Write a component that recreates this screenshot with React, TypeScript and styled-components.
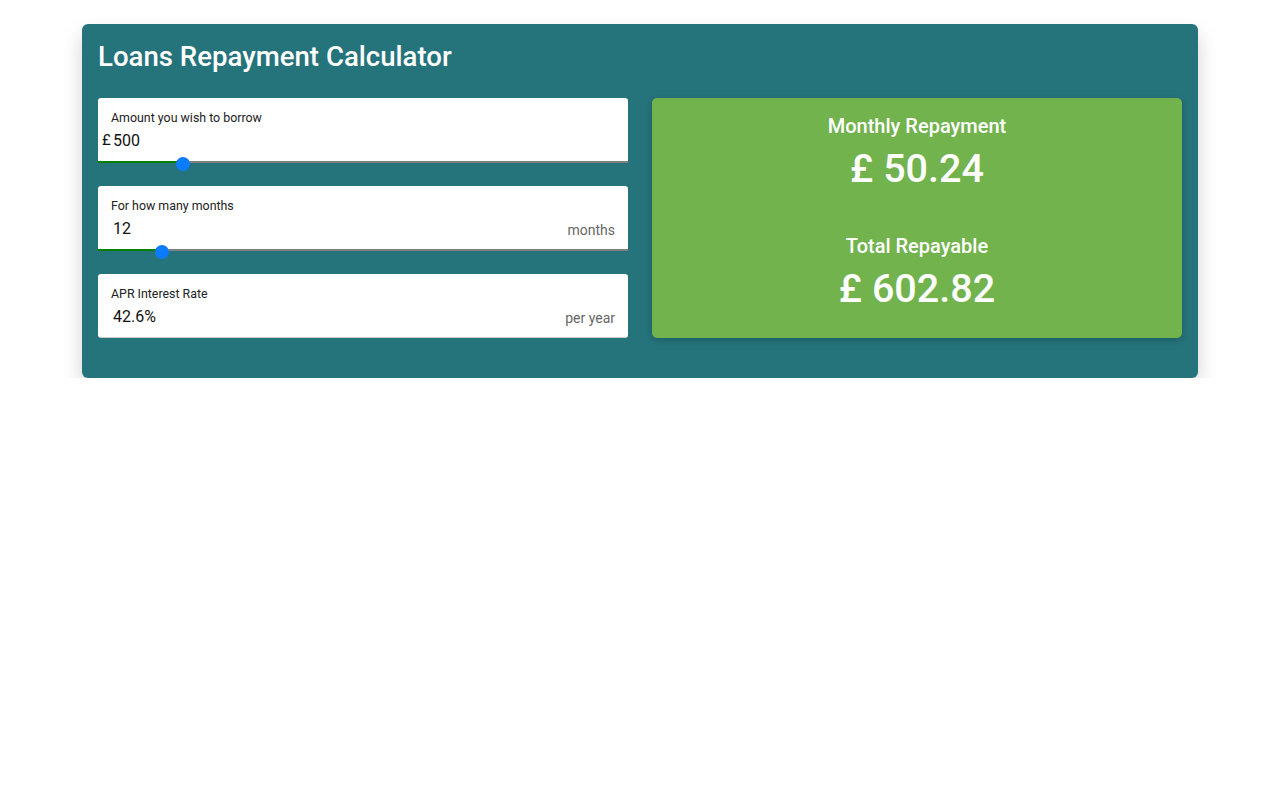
import * as React from 'react';
import styled, { createGlobalStyle } from 'styled-components';

const colors = {
  teal: '#25737b',
  green: '#72b34e',
  white: '#ffffff',
  label: '#222222',
  muted: '#666666',
  thumb: '#0b7bff',
  fill: '#008000',
  track: '#808080'
};

const GlobalStyle = createGlobalStyle`
  body {
    margin: 0;
    background: #ffffff;
    font-family: Roboto, 'Liberation Sans', Arial, sans-serif;
  }
`;

const Page = styled.div`
  padding-top: 24px;
`;

const Calculator = styled.div`
  width: 1116px;
  box-sizing: border-box;
  margin: 0 auto;
  padding: 16px 16px 40px;
  background: ${colors.teal};
  border-radius: 6px;
  box-shadow: 0 10px 20px rgba(0, 0, 0, 0.18);
`;

const Title = styled.h1`
  margin: 0 0 24px;
  font-size: 27.6px;
  line-height: 34px;
  font-weight: 500;
  color: ${colors.white};
`;

const Columns = styled.div`
  display: grid;
  grid-template-columns: 1fr 1fr;
  gap: 24px;
  align-items: start;
`;

const Fields = styled.div`
  display: flex;
  flex-direction: column;
  gap: 23px;
`;

const FieldGroup = styled.div`
  display: flex;
  flex-direction: column;
`;

const Field = styled.div<{ $bordered?: boolean }>`
  height: ${p => (p.$bordered ? 64 : 63)}px;
  box-sizing: border-box;
  padding-top: 12px;
  background: ${colors.white};
  border-radius: 3px 3px ${p => (p.$bordered ? '3px 3px' : '0 0')};
  border-bottom: ${p => (p.$bordered ? '1px solid #c8c8c8' : 'none')};
`;

const Label = styled.div`
  padding-left: 13px;
  font-size: 12.4px;
  line-height: 16px;
  color: ${colors.label};
`;

const ValueRow = styled.div`
  display: flex;
  align-items: center;
  height: 28px;
  padding: 0 13px 0 4px;
`;

const Prefix = styled.span`
  width: 11px;
  flex: none;
  font-size: 15px;
  color: #111111;
`;

const ValueInput = styled.input`
  flex: 1;
  min-width: 0;
  border: none;
  outline: none;
  padding: 0;
  background: transparent;
  font-family: inherit;
  font-size: 16px;
  color: #111111;
`;

const Suffix = styled.span`
  flex: none;
  padding-top: 4px;
  font-size: 14px;
  color: ${colors.muted};
`;

const Range = styled.input`
  -webkit-appearance: none;
  appearance: none;
  display: block;
  width: 100%;
  height: 2px;
  margin: 0;
  background: transparent;

  &::-webkit-slider-runnable-track {
    height: 2px;
    background: linear-gradient(
      to right,
      ${colors.fill} var(--fill),
      ${colors.track} var(--fill)
    );
  }

  &::-webkit-slider-thumb {
    -webkit-appearance: none;
    width: 14px;
    height: 14px;
    margin-top: -4px;
    border-radius: 50%;
    background: ${colors.thumb};
    border: none;
  }
`;

const Results = styled.div`
  display: flex;
  flex-direction: column;
  align-items: center;
  height: 240px;
  box-sizing: border-box;
  padding-top: 16px;
  background: ${colors.green};
  border-radius: 5px;
  box-shadow: 0 2px 6px rgba(0, 0, 0, 0.2);
  color: ${colors.white};
`;

const ResultTitle = styled.h3<{ $gap?: number }>`
  margin: ${p => p.$gap || 0}px 0 7px;
  font-size: 20px;
  line-height: 24px;
  font-weight: 500;
`;

const ResultValue = styled.div`
  font-size: 39.5px;
  line-height: 48px;
  font-weight: 500;
`;

type SliderProps = {
  value: number;
  min: number;
  max: number;
  step: number;
  onChange: (value: number) => void;
};

function Slider(props: SliderProps) {
  const { value, min, max, step, onChange } = props;
  const fraction = (value - min) / (max - min);
  const fill = `calc(7px + ${fraction} * (100% - 14px))`;

  return (
    <Range
      type="range"
      min={min}
      max={max}
      step={step}
      value={value}
      style={{ '--fill': fill } as React.CSSProperties}
      onChange={e => onChange(Number(e.target.value))}
    />
  );
}

const App = () => {
  const [amount, setAmount] = React.useState(500);
  const [months, setMonths] = React.useState(12);
  const [apr, setApr] = React.useState('42.6%');

  const rate = parseFloat(apr) || 0;
  const monthlyRate = Math.pow(1 + rate / 100, 1 / 12) - 1;
  const monthly =
    monthlyRate === 0
      ? amount / months
      : (amount * monthlyRate) / (1 - Math.pow(1 + monthlyRate, -months));
  const total = monthly * months;

  return (
    <Page>
      <GlobalStyle />
      <Calculator>
        <Title>Loans Repayment Calculator</Title>
        <Columns>
          <Fields>
            <FieldGroup>
              <Field>
                <Label>Amount you wish to borrow</Label>
                <ValueRow>
                  <Prefix>£</Prefix>
                  <ValueInput
                    value={amount}
                    onChange={e => setAmount(Number(e.target.value) || 0)}
                  />
                </ValueRow>
              </Field>
              <Slider value={amount} min={0} max={3300} step={50} onChange={setAmount} />
            </FieldGroup>
            <FieldGroup>
              <Field>
                <Label>For how many months</Label>
                <ValueRow>
                  <Prefix />
                  <ValueInput
                    value={months}
                    onChange={e => setMonths(Number(e.target.value) || 1)}
                  />
                  <Suffix>months</Suffix>
                </ValueRow>
              </Field>
              <Slider value={months} min={1} max={100} step={1} onChange={setMonths} />
            </FieldGroup>
            <Field $bordered={true}>
              <Label>APR Interest Rate</Label>
              <ValueRow>
                <Prefix />
                <ValueInput value={apr} onChange={e => setApr(e.target.value)} />
                <Suffix>per year</Suffix>
              </ValueRow>
            </Field>
          </Fields>
          <Results>
            <ResultTitle>Monthly Repayment</ResultTitle>
            <ResultValue>£ {monthly.toFixed(2)}</ResultValue>
            <ResultTitle $gap={41}>Total Repayable</ResultTitle>
            <ResultValue>£ {total.toFixed(2)}</ResultValue>
          </Results>
        </Columns>
      </Calculator>
    </Page>
  );
};

export default App;
